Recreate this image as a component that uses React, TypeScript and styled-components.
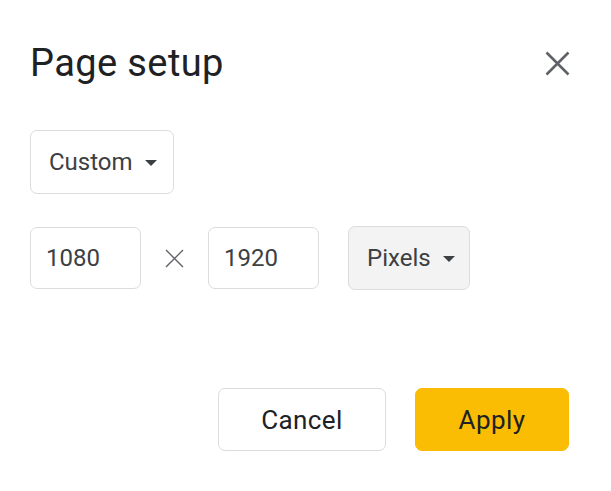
import styled, { createGlobalStyle } from "styled-components";

const GlobalStyle = createGlobalStyle`
  html, body {
    margin: 0;
    padding: 0;
    background: #ffffff;
  }
  body {
    font-family: Roboto, "Liberation Sans", Arial, sans-serif;
    color: #202124;
  }
`;

// ==================== 样式组件 ====================

const Dialog = styled.div`
  width: 611px;
  height: 491px;
  box-sizing: border-box;
  padding: 40px 42px 0 30px;
  display: flex;
  flex-direction: column;
`;

const Header = styled.div`
  display: flex;
  align-items: center;
  justify-content: space-between;
  height: 46px;
`;

const Title = styled.h1`
  margin: 0;
  font-size: 38px;
  font-weight: 400;
  line-height: 46px;
  color: #202124;
  letter-spacing: 0.4px;
`;

const CloseButton = styled.button`
  width: 36px;
  height: 36px;
  margin-right: -6px;
  padding: 0;
  border: none;
  background: transparent;
  display: flex;
  align-items: center;
  justify-content: center;
  cursor: pointer;
`;

const Row = styled.div<{ $top: number }>`
  display: flex;
  align-items: center;
  margin-top: ${(p) => p.$top}px;
`;

const Select = styled.button<{ $width: number; $height: number; $filled?: boolean }>`
  width: ${(p) => p.$width}px;
  height: ${(p) => p.$height}px;
  box-sizing: border-box;
  padding: 0 0 0 18px;
  border: 1px solid #dadce0;
  border-radius: 7px;
  background: ${(p) => (p.$filled ? "#f3f3f3" : "#ffffff")};
  display: flex;
  align-items: center;
  gap: 12px;
  font-family: Roboto, "Liberation Sans", Arial, sans-serif;
  font-size: 24px;
  color: #3c4043;
  cursor: pointer;
`;

const Caret = styled.span`
  width: 0;
  height: 0;
  border-left: 6px solid transparent;
  border-right: 6px solid transparent;
  border-top: 6px solid #3c4043;
  margin-top: 1px;
`;

const SizeInput = styled.input`
  width: 111px;
  height: 62px;
  box-sizing: border-box;
  padding: 0 0 0 15px;
  border: 1px solid #dadce0;
  border-radius: 7px;
  outline: none;
  font-family: Roboto, "Liberation Sans", Arial, sans-serif;
  font-size: 24px;
  color: #3c4043;
  background: #ffffff;
`;

const Times = styled.span`
  width: 67px;
  display: flex;
  align-items: center;
  justify-content: center;
`;

const Actions = styled.div`
  margin-top: auto;
  margin-bottom: 40px;
  display: flex;
  justify-content: flex-end;
  gap: 29px;
`;

const ActionButton = styled.button<{ $primary?: boolean; $width: number }>`
  width: ${(p) => p.$width}px;
  height: 63px;
  box-sizing: border-box;
  border-radius: 7px;
  border: 1px solid ${(p) => (p.$primary ? "#fbbc04" : "#dadce0")};
  background: ${(p) => (p.$primary ? "#fbbc04" : "#ffffff")};
  font-family: Roboto, "Liberation Sans", Arial, sans-serif;
  font-size: 26px;
  font-weight: 400;
  letter-spacing: 0.4px;
  color: #202124;
  cursor: pointer;
`;

// ==================== 主组件 ====================

export default function App() {
  return (
    <>
      <GlobalStyle />
      <Dialog>
        <Header>
          <Title>Page setup</Title>
          <CloseButton aria-label="Close">
            <svg width="25" height="25" viewBox="0 0 25 25">
              <path
                d="M1.5 1.5 L23.5 23.5 M23.5 1.5 L1.5 23.5"
                stroke="#5f6368"
                strokeWidth="2.6"
                fill="none"
              />
            </svg>
          </CloseButton>
        </Header>

        <Row $top={44}>
          <Select $width={144} $height={64}>
            Custom
            <Caret />
          </Select>
        </Row>

        <Row $top={32}>
          <SizeInput defaultValue="1080" />
          <Times>
            <svg width="19" height="19" viewBox="0 0 19 19">
              <path
                d="M1 1 L18 18 M18 1 L1 18"
                stroke="#5f6368"
                strokeWidth="1.4"
                fill="none"
              />
            </svg>
          </Times>
          <SizeInput defaultValue="1920" />
          <Select $width={122} $height={64} $filled style={{ marginLeft: 29 }}>
            Pixels
            <Caret />
          </Select>
        </Row>

        <Actions>
          <ActionButton $width={168}>Cancel</ActionButton>
          <ActionButton $width={154} $primary>
            Apply
          </ActionButton>
        </Actions>
      </Dialog>
    </>
  );
}
